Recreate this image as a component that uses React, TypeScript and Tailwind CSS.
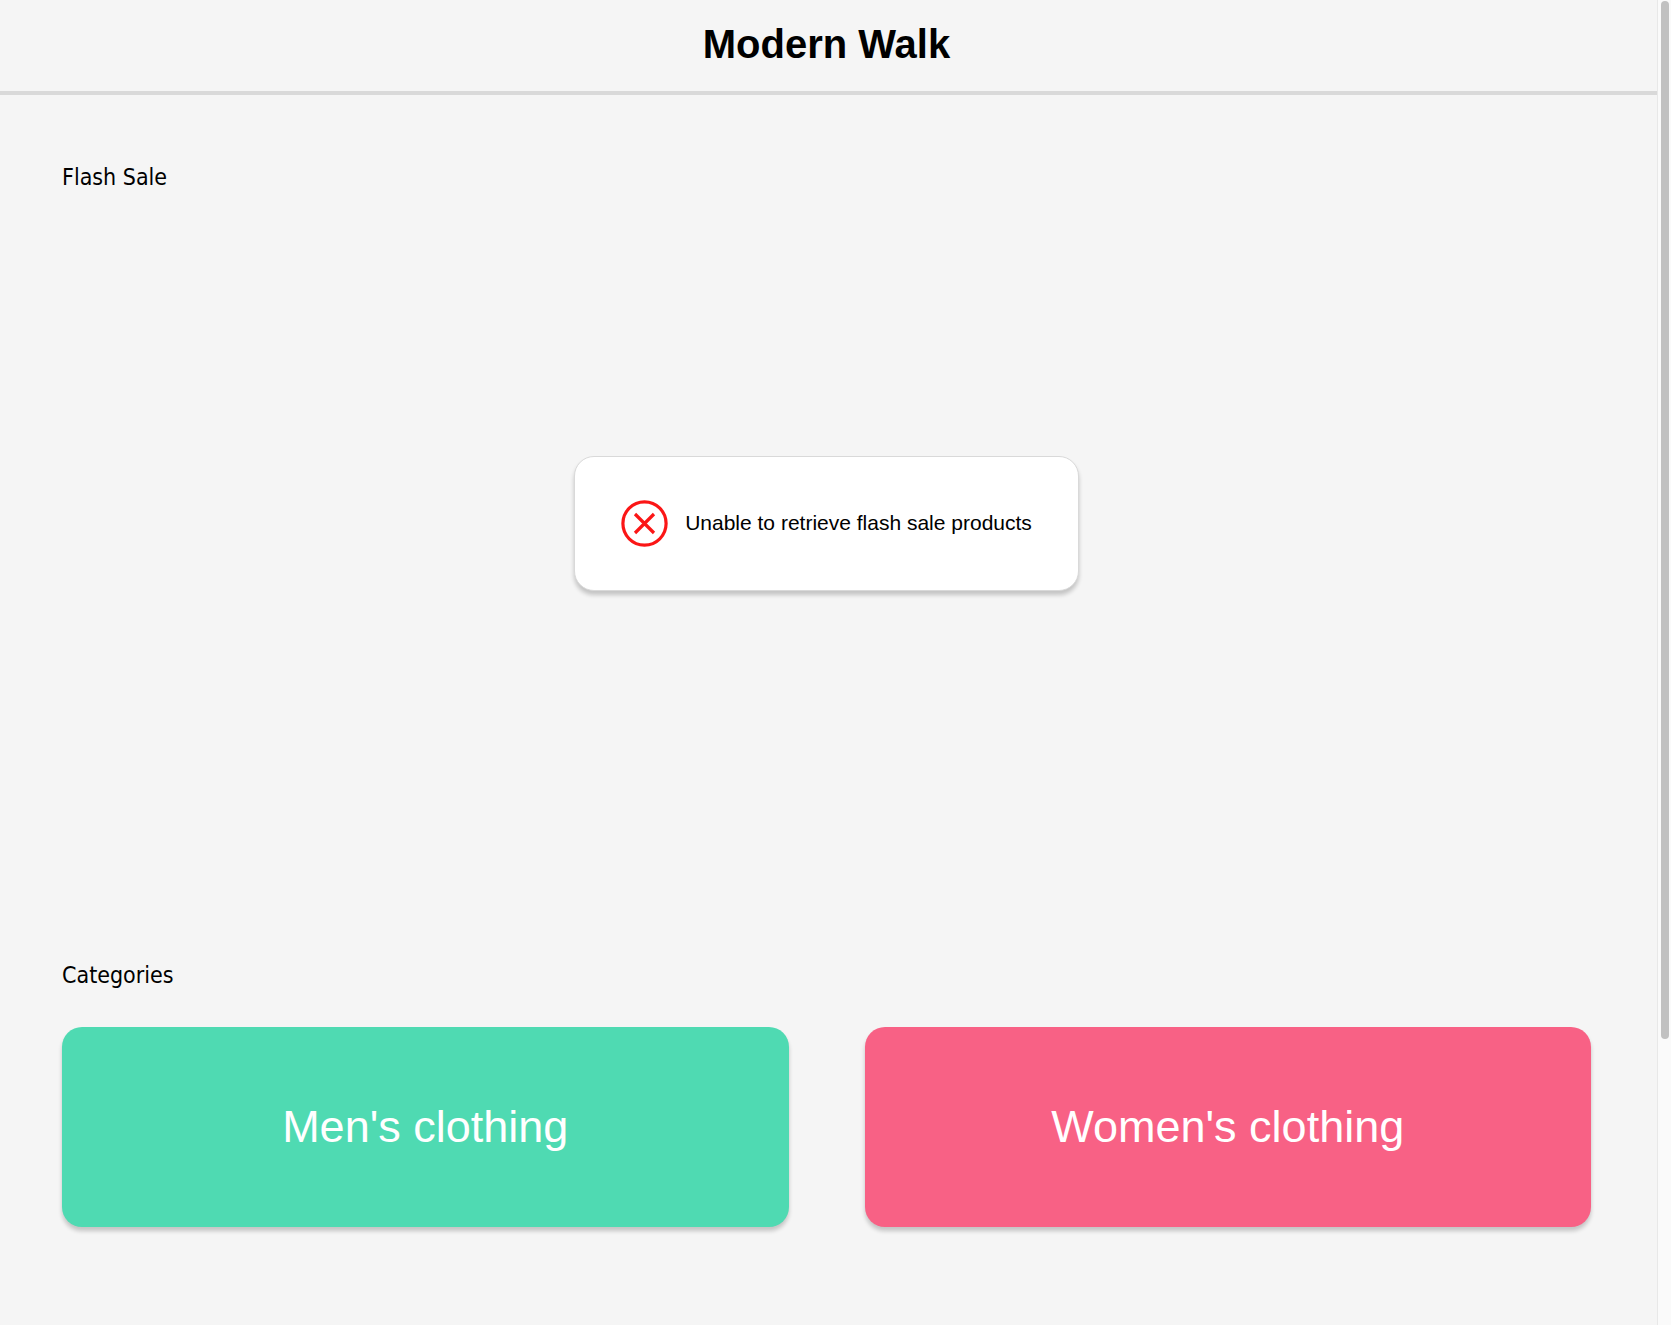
const headingClass =
  "font-['DejaVu_Sans_Condensed','DejaVu_Sans',sans-serif] text-[23px] leading-8 tracking-normal text-black";

const categories = [
  { label: "Men's clothing", href: '#mens-clothing', color: 'bg-[#4fdab2]' },
  { label: "Women's clothing", href: '#womens-clothing', color: 'bg-[#f86185]' },
];

function ErrorIcon() {
  return (
    <svg viewBox="0 0 47 47" className="size-[47px] shrink-0" fill="none" stroke="#fb1616" strokeWidth="3.2" aria-hidden="true">
      <circle cx="23.5" cy="23.5" r="21.6" />
      <path d="M14 14 33 33M33 14 14 33" />
    </svg>
  );
}

function Header() {
  return (
    <header className="border-b-4 border-[#d9d9d9] pt-5 pr-1 pb-[23px] text-center">
      <h1 className="text-[40px] leading-12 font-bold text-black">Modern Walk</h1>
    </header>
  );
}

function FlashSale() {
  return (
    <section className="flex flex-col" aria-labelledby="flash-sale">
      <h2 id="flash-sale" className={headingClass}>
        Flash Sale
      </h2>
      <div className="flex min-h-[660px] items-center justify-center">
        <div
          role="alert"
          className="flex items-center gap-[17px] rounded-[20px] border border-[#d9d9d9] bg-white py-[43px] pr-[46px] pl-[46px] shadow-[0_4px_4px_rgba(0,0,0,0.2)]"
        >
          <ErrorIcon />
          <p className="text-[21px] leading-6 text-black">Unable to retrieve flash sale products</p>
        </div>
      </div>
    </section>
  );
}

function Categories() {
  return (
    <section className="mt-[106px]" aria-labelledby="categories">
      <h2 id="categories" className={headingClass}>
        Categories
      </h2>
      <div className="mt-9 grid grid-cols-2 gap-[76px]">
        {categories.map((c) => (
          <a
            key={c.label}
            href={c.href}
            className={`flex h-[200px] items-center justify-center rounded-[20px] text-[45px] leading-[52px] text-white shadow-[0_4px_4px_rgba(0,0,0,0.2)] ${c.color}`}
          >
            {c.label}
          </a>
        ))}
      </div>
    </section>
  );
}

export default function App() {
  return (
    <div className="flex min-h-screen bg-[#f5f5f5] font-['Liberation_Sans',Arial,sans-serif]">
      <div className="min-w-0 flex-1">
        <Header />
        <main className="pt-[66px] pr-[66px] pb-20 pl-[62px]">
          <FlashSale />
          <Categories />
        </main>
      </div>
      <div className="sticky top-0 h-screen w-[14px] border-l border-[#e8e8e8] bg-[#fafafa] px-[3px] pt-px" aria-hidden="true">
        <div className="h-[78.4%] w-2 rounded-full bg-[#c1c1c1]" />
      </div>
    </div>
  );
}
